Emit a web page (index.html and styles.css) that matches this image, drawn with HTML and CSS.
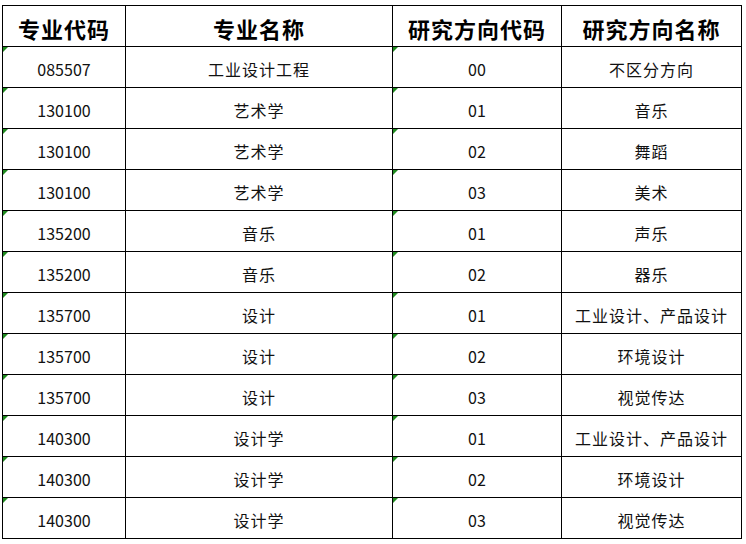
FILE: index.html
```html
<!DOCTYPE html>
<html lang="zh">
<head>
<meta charset="utf-8">
<title>专业方向</title>
<link rel="stylesheet" href="styles.css">
</head>
<body>
<div class="sheet">
<table class="grid">
<colgroup>
<col class="c1"><col class="c2"><col class="c3"><col class="c4">
</colgroup>
<thead>
<tr><th>专业代码</th><th>专业名称</th><th>研究方向代码</th><th>研究方向名称</th></tr>
</thead>
<tbody>
<tr><td class="mark">085507</td><td>工业设计工程</td><td class="mark">00</td><td>不区分方向</td></tr>
<tr><td class="mark">130100</td><td>艺术学</td><td class="mark">01</td><td>音乐</td></tr>
<tr><td class="mark">130100</td><td>艺术学</td><td class="mark">02</td><td>舞蹈</td></tr>
<tr><td class="mark">130100</td><td>艺术学</td><td class="mark">03</td><td>美术</td></tr>
<tr><td class="mark">135200</td><td>音乐</td><td class="mark">01</td><td>声乐</td></tr>
<tr><td class="mark">135200</td><td>音乐</td><td class="mark">02</td><td>器乐</td></tr>
<tr><td class="mark">135700</td><td>设计</td><td class="mark">01</td><td>工业设计、产品设计</td></tr>
<tr><td class="mark">135700</td><td>设计</td><td class="mark">02</td><td>环境设计</td></tr>
<tr><td class="mark">135700</td><td>设计</td><td class="mark">03</td><td>视觉传达</td></tr>
<tr><td class="mark">140300</td><td>设计学</td><td class="mark">01</td><td>工业设计、产品设计</td></tr>
<tr><td class="mark">140300</td><td>设计学</td><td class="mark">02</td><td>环境设计</td></tr>
<tr><td class="mark">140300</td><td>设计学</td><td class="mark">03</td><td>视觉传达</td></tr>
</tbody>
</table>
</div>
</body>
</html>
```
FILE: styles.css
```css
html, body {
  margin: 0;
  padding: 0;
  background: #ffffff;
}
.sheet {
  padding: 5px 0 0 2px;
}
.grid {
  border-collapse: collapse;
  table-layout: fixed;
  width: 740px;
  font-family: "Noto Sans CJK SC", "Noto Sans", sans-serif;
  color: #000;
}
.c1 { width: 123px; }
.c2 { width: 267px; }
.c3 { width: 169px; }
.c4 { width: 180px; }
.grid th, .grid td {
  border: 1px solid #000;
  height: 41px;
  padding: 0;
  text-align: center;
  vertical-align: middle;
  white-space: nowrap;
  box-sizing: border-box;
}
.grid th {
  font-size: 22px;
  font-weight: bold;
  letter-spacing: 1px;
  padding-top: 3px;
}
.grid td {
  font-size: 16px;
  padding-top: 3px;
  color: #111;
}
.grid td:nth-child(even) {
  letter-spacing: 1px;
}
.mark {
  position: relative;
}
.mark::before {
  content: "";
  position: absolute;
  left: 0;
  top: 0;
  border-top: 5px solid #1e8a1e;
  border-right: 5px solid transparent;
}
```
